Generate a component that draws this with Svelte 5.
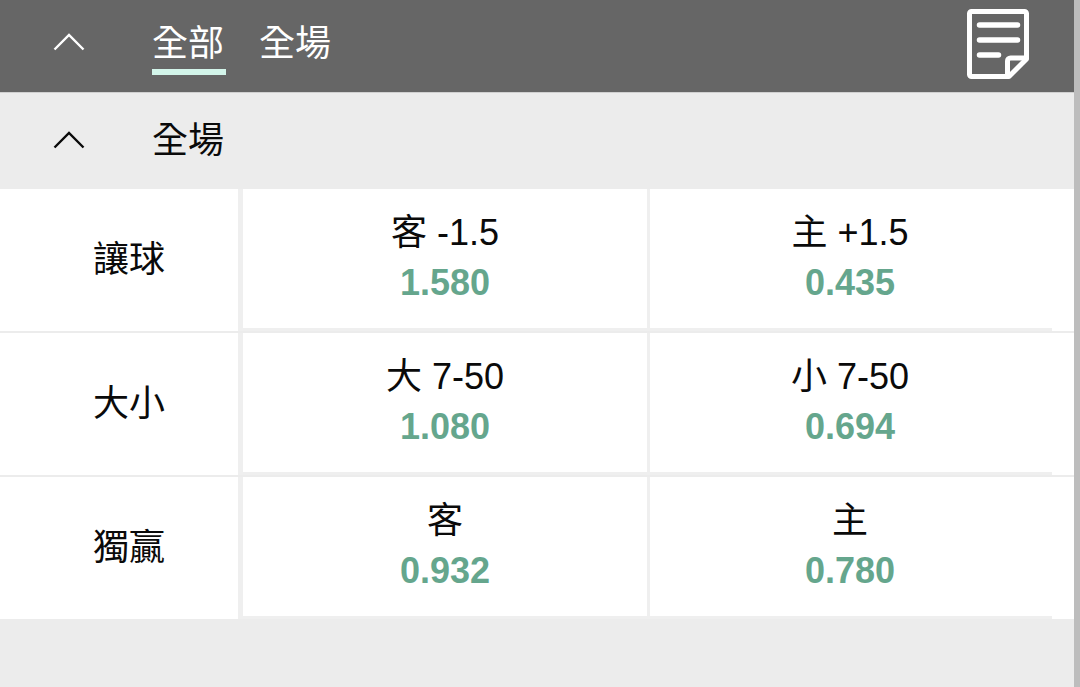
<script>
  const rows = [
    { label: '讓球', a: ['客 -1.5', '1.580'], b: ['主 +1.5', '0.435'] },
    { label: '大小', a: ['大 7-50', '1.080'], b: ['小 7-50', '0.694'] },
    { label: '獨贏', a: ['客', '0.932'], b: ['主', '0.780'] }
  ];
</script>

<div class="page">
  <div class="main">
    <header class="top">
      <svg class="chev" viewBox="0 0 32 18" width="32" height="18"><path d="M1.5 16.5 16 2l14.5 14.5" fill="none" stroke="#fff" stroke-width="2.4"/></svg>
      <nav class="tabs">
        <span class="tab active">全部</span>
        <span class="tab">全場</span>
      </nav>
      <svg class="doc" viewBox="0 0 62 70" width="62" height="70">
        <path d="M4.500 2.500h53a2 2 0 0 1 2 2V50L42 67.500H4.500a2 2 0 0 1-2-2V4.500a2 2 0 0 1 2-2Z" fill="none" stroke="#fff" stroke-width="5" stroke-linejoin="round"/>
        <path d="M12.500 16h38M12.500 31h38M12.500 46h19" fill="none" stroke="#fff" stroke-width="5.500" stroke-linecap="round"/>
        <path d="M59 49H43.500a3 3 0 0 0-3 3v15" fill="none" stroke="#fff" stroke-width="5"/>
      </svg>
    </header>
    <div class="section">
      <svg class="chev" viewBox="0 0 32 18" width="32" height="18"><path d="M1.500 16.500 16 2l14.500 14.500" fill="none" stroke="#0a0a0a" stroke-width="2.400"/></svg>
      <span class="section-title">全場</span>
    </div>
    <div class="rows">
      {#each rows as r}
        <div class="row">
          <div class="label">{r.label}</div>
          <div class="odds first"><span class="name">{r.a[0]}</span><span class="val">{r.a[1]}</span></div>
          <div class="odds second"><span class="name">{r.b[0]}</span><span class="val">{r.b[1]}</span></div>
          <div class="rule"></div>
        </div>
      {/each}
    </div>
  </div>
  <div class="bar"></div>
</div>

<style>
  :global(body) { margin: 0; background: #ececec; }
  .page {
    display: flex;
    width: 1080px;
    height: 687px;
    overflow: hidden;
    font-family: "Liberation Sans", "Noto Sans CJK TC", sans-serif;
    background: #ececec;
  }
  .main { flex: 1; min-width: 0; }
  .bar { width: 6px; background: #bdbdbd; }
  .top {
    display: flex;
    align-items: center;
    height: 93px;
    background: #666;
    padding-left: 53px;
    border-bottom: 1px solid #d0d0d0;
    box-sizing: border-box;
  }
  .top .chev { margin-bottom: 8px; }
  .tabs { display: flex; gap: 34px; margin-left: 67px; align-self: flex-start; }
  .tab {
    color: #fff;
    font-size: 36px;
    line-height: 42px;
    padding: 23px 2px 4px 0;
    border-bottom: 6px solid transparent;
    width: 72px;
    text-align: center;
    white-space: nowrap;
  }
  .tab.active { border-bottom-color: #d3f5ea; }
  .tabs .tab + .tab { margin-left: -1px; }
  .doc { margin-left: auto; margin-right: 45px; margin-bottom: 4px; }
  .section {
    display: flex;
    align-items: center;
    height: 96px;
    padding-left: 53px;
  }
  .section .chev { margin-bottom: 2px; }
  .section-title {
    margin-left: 67px;
    font-size: 36px;
    line-height: 42px;
    color: #0a0a0a;
  }
  .rows { display: flex; flex-direction: column; gap: 2px; }
  .row {
    display: grid;
    grid-template-columns: 238px 409px 1fr;
    grid-template-rows: 139px 3px;
    background: #fff;
    height: 142px;
  }
  .label {
    grid-row: 1 / 3;
    display: flex;
    align-items: center;
    justify-content: center;
    font-size: 36px;
    color: #0a0a0a;
    padding: 0 0 8px 20px;
    border-right: 5px solid #efefef;
    width: 218px;
    box-sizing: content-box;
    height: 134px;
  }
  .odds {
    display: flex;
    flex-direction: column;
    align-items: center;
    padding-top: 22px;
    box-sizing: border-box;
  }
  .first { padding-left: 5px; }
  .second {
    border-left: 3px solid #efefef;
    padding-right: 24px;
  }
  .name { font-size: 36px; line-height: 44px; color: #0a0a0a; white-space: nowrap; }
  .val { font-size: 36px; line-height: 44px; margin-top: 6px; font-weight: 700; color: #65a68d; }
  .rule {
    grid-row: 2;
    grid-column: 2 / 4;
    margin-left: 5px;
    margin-right: 22px;
    background: #efefef;
  }
</style>
